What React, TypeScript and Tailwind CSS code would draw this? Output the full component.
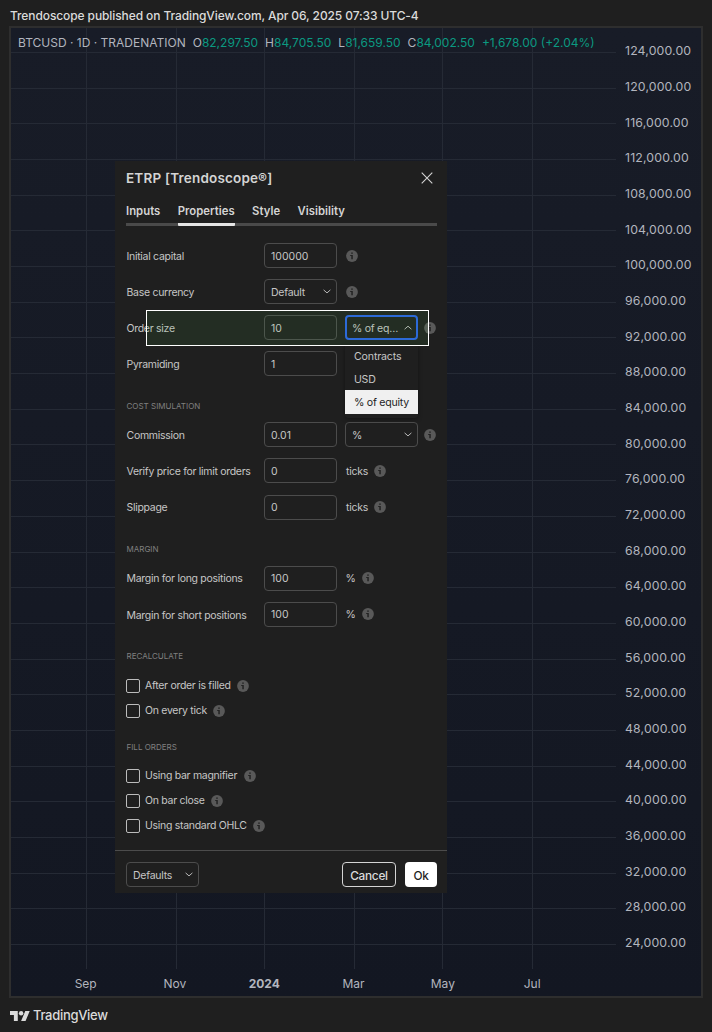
import type { ReactNode } from "react";

const verticals = [86, 176, 264, 354, 442, 532];
const prices = Array.from({ length: 26 }, (_, i) => `${124 - i * 4},000.00`);

function Info() {
  return (
    <svg className="h-3 w-3 shrink-0" viewBox="0 0 12 12">
      <circle cx="6" cy="6" r="5.9" fill="#595959" />
      <path d="M5.2 2.4h1.6v1.4H5.2zM4.2 5h2.6v4.3H5.3V6.1H4.2z" fill="#222222" />
    </svg>
  );
}

function Chevron({ up = false }: { up?: boolean }) {
  return (
    <svg className="h-[5px] w-2 shrink-0" viewBox="0 0 8 5">
      <path d={up ? "M0.6 4.2 4 1.2l3.4 3" : "M0.6 0.9 4 3.9l3.4-3"} stroke="#b8b8b8" strokeWidth="1" fill="none" />
    </svg>
  );
}

function Field({ children }: { children: ReactNode }) {
  return (
    <div className="flex h-[25px] w-[73px] shrink-0 items-center rounded-[4px] border border-[#4c4c4c] pt-[2px] pl-[6px] text-[10.5px] tracking-[0px]">
      {children}
    </div>
  );
}

function Select({ children, up = false }: { children: ReactNode; up?: boolean }) {
  return (
    <div
      className={
        up
          ? "flex h-[25px] w-[73px] shrink-0 items-center justify-between rounded-[4px] border-2 border-[#2962e8] pr-1 pl-[5px]"
          : "flex h-[25px] w-[73px] shrink-0 items-center justify-between rounded-[4px] border border-[#4c4c4c] pr-[5px] pl-[6px]"
      }
    >
      <span className="pt-[2px] whitespace-nowrap">{children}</span>
      <Chevron up={up} />
    </div>
  );
}

function Row({ label, children }: { label: string; children: ReactNode }) {
  return (
    <div className="flex h-[25px] items-center">
      <span className="w-[138px] shrink-0 pt-[2.5px] pl-[0.5px] tracking-[-0.29px] whitespace-nowrap">{label}</span>
      {children}
    </div>
  );
}

function Section({ children }: { children: string }) {
  return <h3 className="pl-[0.5px] text-[8px] leading-[10px] tracking-[0px] text-[#808080]">{children}</h3>;
}

function Check({ label }: { label: string }) {
  return (
    <label className="flex h-[14px] items-center whitespace-nowrap">
      <span className="mr-[5px] h-[14px] w-[14px] rounded-[2px] border border-[#bcbcbc]" />
      <span className="mr-[6.5px] tracking-[-0.29px]">{label}</span>
      <Info />
    </label>
  );
}

function Quote({ k, v }: { k: string; v: string }) {
  return (
    <span>
      {k}
      <span className="text-[#0b9981]">{v}</span>
    </span>
  );
}

function Dialog() {
  return (
    <div className="absolute top-[161px] left-[115px] h-[732px] w-[332px] bg-[#1f1f1f] text-[10.5px] leading-[14px] tracking-[-0.26px] text-[#c6c6c6]">
      <div className="flex h-[34px] items-center justify-between pr-[14.5px] pl-[11px]">
        <h2 className="text-[13.5px] font-semibold tracking-[0.19px] text-[#d4d4d4]">ETRP [Trendoscope®]</h2>
        <svg className="h-3 w-3" viewBox="0 0 12 12">
          <path d="M0.7 0.7l10.6 10.6M11.3 0.7L0.7 11.3" stroke="#d4d4d4" strokeWidth="1.1" />
        </svg>
      </div>
      <div className="mr-[10.5px] ml-[11px] mt-[9px] flex h-[21.5px] gap-[17.3px] border-b-[3px] border-[#4a4a4a] text-[11.3px] font-semibold tracking-[0.04px] text-[#d4d4d4]">
        <span>Inputs</span>
        <span className="-mb-[3px] rounded-[1px] border-b-[3px] border-[#e4e4e4]">Properties</span>
        <span>Style</span>
        <span>Visibility</span>
      </div>
      <div className="pt-[17.5px] pl-[11px]">
        <div className="flex flex-col gap-[11px]">
          <Row label="Initial capital">
            <Field>100000</Field>
            <span className="ml-[9px]"><Info /></span>
          </Row>
          <Row label="Base currency">
            <Select>Default</Select>
            <span className="ml-[9px]"><Info /></span>
          </Row>
          <Row label="Order size">
            <Field>10</Field>
            <div className="ml-2"><Select up>% of eq…</Select></div>
            <span className="ml-[6px]"><Info /></span>
          </Row>
          <Row label="Pyramiding">
            <Field>1</Field>
          </Row>
        </div>
        <div className="h-[46px] pt-[25px]"><Section>COST SIMULATION</Section></div>
        <div className="flex flex-col gap-[11.3px]">
          <Row label="Commission">
            <Field>0.01</Field>
            <div className="ml-2"><Select>%</Select></div>
            <span className="ml-[6px]"><Info /></span>
          </Row>
          <Row label="Verify price for limit orders">
            <Field>0</Field>
            <span className="mr-[6px] ml-[9px] pt-[2px]">ticks</span>
            <Info />
          </Row>
          <Row label="Slippage">
            <Field>0</Field>
            <span className="mr-[6px] ml-[9px] pt-px">ticks</span>
            <Info />
          </Row>
        </div>
        <div className="h-[46px] pt-[24.5px]"><Section>MARGIN</Section></div>
        <div className="flex flex-col gap-[11.3px]">
          <Row label="Margin for long positions">
            <Field>100</Field>
            <span className="mr-[6px] ml-[8.5px] pt-px">%</span>
            <Info />
          </Row>
          <Row label="Margin for short positions">
            <Field>100</Field>
            <span className="mr-[6px] ml-[8.5px] pt-[2px]">%</span>
            <Info />
          </Row>
        </div>
        <div className="h-[51.7px] pt-[24.5px]"><Section>RECALCULATE</Section></div>
        <div className="flex flex-col gap-[11px]">
          <Check label="After order is filled" />
          <Check label="On every tick" />
        </div>
        <div className="h-[51.6px] pt-[24px]"><Section>FILL ORDERS</Section></div>
        <div className="flex flex-col gap-[11px]">
          <Check label="Using bar magnifier" />
          <Check label="On bar close" />
          <Check label="Using standard OHLC" />
        </div>
      </div>
      <div className="absolute bottom-0 left-0 flex h-[43px] w-full items-start border-t border-[#4c4c4c] pt-[11px] pr-[10px] pl-[11px]">
        <Select>Defaults</Select>
        <button className="ml-auto h-[25px] w-[54px] rounded-[4px] border border-[#d4d4d4] pt-[2px] text-[11.8px] font-medium text-[#dbdbdb]">Cancel</button>
        <button className="ml-[9px] h-[25px] w-8 rounded-[4px] bg-white pt-[2px] text-[11.8px] font-medium text-[#1f1f1f]">Ok</button>
      </div>
      <div className="absolute top-[184px] left-[230px] w-[73px] rounded-b-[3px] bg-[#1f1f1f] pb-1 text-[10.6px] shadow-[0_1px_4px_rgba(0,0,0,0.4)]">
        <div className="flex h-[23px] items-center pt-px pl-[9px] tracking-[-0.15px]">Contracts</div>
        <div className="flex h-[22px] items-center pt-[2px] pl-[9px]">USD</div>
        <div className="flex h-6 items-center bg-[#f0f0f0] pt-[2px] pl-[9px] whitespace-nowrap text-[#1f1f1f]">% of equity</div>
      </div>
      <div className="absolute top-[149px] left-[31px] h-9 w-[283px] border border-white bg-[#4caf50]/10" />
    </div>
  );
}

export default function App() {
  return (
    <div className="relative flex h-[1032px] w-[712px] flex-col overflow-hidden bg-[#1f1f1f] font-['Inter',sans-serif] text-[#b2b5be]">
      <header className="flex h-[26px] shrink-0 items-center pt-[5px] pl-[10px] text-[12px] font-medium tracking-[-0.1px] whitespace-nowrap text-[#dbdbdb]">
        Trendoscope published on TradingView.com, Apr 06, 2025 07:33 UTC-4
      </header>
      <main className="relative ml-[9px] h-[972px] w-[694px] shrink-0 border-2 border-[#2e2e2e] bg-linear-to-b from-[#181c27] to-[#131722]">
        <svg className="absolute top-0 left-0 h-[941px] w-[605px]" viewBox="0 0 605 941">
          {verticals.map((x) => (
            <path key={x} d={`M${x - 10.5} 0V941`} stroke="#252a35" strokeWidth="1" />
          ))}
          {prices.map((p, i) => (
            <path key={p} d={`M0 ${Math.round(24 + i * 35.68) + 0.5}H605`} stroke="#252a35" strokeWidth="1" />
          ))}
        </svg>
        <div className="relative flex h-[941px] justify-between">
          <div className="flex h-[30px] items-center gap-[7px] pl-[7px] text-[12px] whitespace-nowrap">
            <span>BTCUSD · 1D · TRADENATION</span>
            <Quote k="O" v="82,297.50" />
            <Quote k="H" v="84,705.50" />
            <Quote k="L" v="81,659.50" />
            <Quote k="C" v="84,002.50" />
            <span className="text-[#0b9981]">+1,678.00 (+2.04%)</span>
          </div>
          <div className="flex w-[76px] flex-col pt-[5.6px] text-[12.3px] tracking-[0.15px]">
            {prices.map((p) => (
              <span key={p} className="flex h-[35.68px] shrink-0 items-center">{p}</span>
            ))}
          </div>
        </div>
        <div className="grid h-[27px] w-[536px] grid-cols-[89.3px_89.3px_89.3px_89.3px_89.3px_89.3px] items-center pt-[3px] pl-[30px] text-center text-[12px]">
          <span>Sep</span>
          <span>Nov</span>
          <span className="font-bold">2024</span>
          <span>Mar</span>
          <span>May</span>
          <span>Jul</span>
        </div>
      </main>
      <footer className="flex h-[34px] items-center gap-[3px] pt-px pl-[10px] text-[13px] font-medium tracking-[-0.3px] text-[#dbdbdb]">
        <svg className="h-[10px] w-5" viewBox="0 4 36 18" fill="#dbdbdb">
          <path d="M14 22H7V11H0V4h14v18zM28 22h-8l7.5-18h8L28 22z" />
          <circle cx="20" cy="8" r="4" />
        </svg>
        TradingView
      </footer>
      <Dialog />
    </div>
  );
}
